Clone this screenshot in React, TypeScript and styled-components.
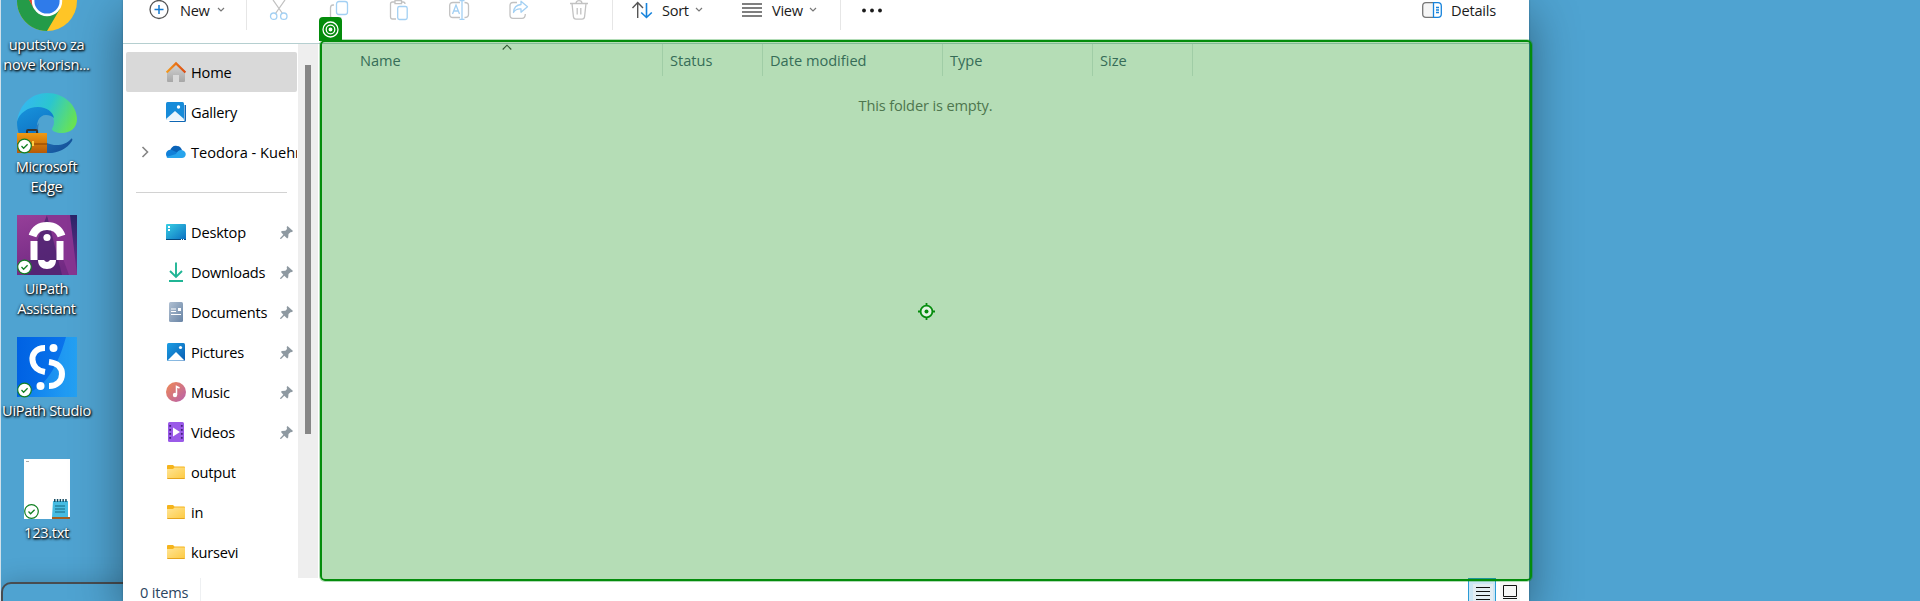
import React from "react";
import styled, { createGlobalStyle } from "styled-components";

const GREEN = "#048c0c";

const Global = createGlobalStyle`
  * { box-sizing: border-box; }
  body { margin: 0; overflow: hidden; font-family: "Open Sans", "Noto Sans", sans-serif; font-size: 14.6px; color: #111; }
  svg { display: block; flex: none; overflow: visible; }
`;

const Desktop = styled.main`
  display: flex;
  position: relative;
  width: 1920px;
  height: 601px;
  overflow: hidden;
  background: #4fa3d1;
  border-left: 1px solid #cfe0ea;
`;

const Shortcuts = styled.div`
  width: 122px;
  flex: none;
  display: flex;
  flex-direction: column;
  margin-top: -29px;
`;

const Shortcut = styled.div`
  width: 92px;
  height: 122px;
  flex: none;
  display: flex;
  flex-direction: column;
  align-items: center;
`;

const ShortcutName = styled.div<{ $ls?: number }>`
  margin: 3px 1px 0 0;
  line-height: 20px;
  text-align: center;
  white-space: pre;
  color: #fff;
  letter-spacing: ${(p) => p.$ls ?? -0.3}px;
  text-shadow: 1px 1px 2px #000, 0 1px 3px #000;
`;

const BackWindow = styled.div`
  position: absolute;
  left: 0;
  top: 582px;
  width: 140px;
  height: 40px;
  border: 2px solid #484c50;
  border-radius: 10px 0 0 0;
  box-shadow: 0 0 26px rgba(0, 0, 0, 0.2);
  background: #4fa3d1;
`;

const Explorer = styled.section`
  position: relative;
  width: 1406px;
  flex: none;
  display: flex;
  flex-direction: column;
  background: #fff;
  box-shadow: 0 0 2px rgba(0, 0, 0, 0.25), 0 14px 46px rgba(0, 0, 0, 0.42);
`;

const Toolbar = styled.header`
  height: 44px;
  flex: none;
  border-bottom: 1px solid #b5cfd0;
`;

const Tools = styled.div`
  height: 40px;
  margin-top: -10px;
  display: flex;
  align-items: center;
  padding-left: 26px;
`;

const Tool = styled.div<{ $w: number; $gap?: number; $ls?: number }>`
  width: ${(p) => p.$w}px;
  height: 20px;
  flex: none;
  display: flex;
  align-items: center;
  gap: ${(p) => p.$gap ?? 11}px;
  letter-spacing: ${(p) => p.$ls ?? -0.3}px;
  color: #1b1b1b;
  white-space: nowrap;
`;

const ToolText = styled.span`
  line-height: 20px;
`;

const ChevronMark = styled.svg`
  margin-left: -4px;
`;

const Rule = styled.div<{ $after: number }>`
  width: 1px;
  height: 40px;
  flex: none;
  background: #e6e6e6;
  margin-right: ${(p) => p.$after}px;
`;

const Grow = styled.div`
  flex: 1;
`;

const Body = styled.div`
  height: 534px;
  flex: none;
  display: flex;
`;

const Nav = styled.nav`
  width: 175px;
  flex: none;
  padding: 8px 1px 0 3px;
  overflow: hidden;
`;

const NavRow = styled.div<{ $active?: boolean }>`
  height: 40px;
  display: flex;
  align-items: center;
  border-radius: 2px;
  background: ${(p) => (p.$active ? "#d9d9d9" : "transparent")};
`;

const Expander = styled.div`
  width: 40px;
  flex: none;
  padding-left: 15px;
`;

const NavIcon = styled.div`
  width: 20px;
  height: 20px;
  flex: none;
`;

const NavText = styled.span<{ $ls?: number }>`
  flex: 1;
  min-width: 0;
  padding-left: 5px;
  line-height: 20px;
  padding-bottom: 1px;
  overflow: hidden;
  white-space: nowrap;
  color: #000;
  letter-spacing: ${(p) => p.$ls ?? -0.2}px;
`;

const PinSlot = styled.div`
  width: 17px;
  flex: none;
`;

const NavSeparator = styled.div`
  height: 40px;
  padding: 20px 10px 0;
  &::after {
    content: "";
    display: block;
    height: 1px;
    background: #d2d2d2;
  }
`;

const Track = styled.div`
  width: 20px;
  flex: none;
  background: #eeeeee;
  padding: 21px 7px 0;
`;

const Thumb = styled.div`
  width: 6px;
  height: 369px;
  background: #868686;
`;

const Files = styled.div`
  flex: 1;
  padding-left: 34px;
`;

const Columns = styled.div`
  display: flex;
  height: 32px;
`;

const Column = styled.div<{ $w: number; $pad?: number }>`
  width: ${(p) => p.$w}px;
  flex: none;
  position: relative;
  border-right: 1px solid #e2e8e8;
  padding: 6px 0 0 ${(p) => p.$pad ?? 7}px;
  line-height: 20px;
  color: #4c607a;
  letter-spacing: 0;
`;

const SortMark = styled.div`
  position: absolute;
  left: 150px;
  top: 0;
`;

const Empty = styled.p`
  margin: 19px 0 0 -34px;
  padding-left: 4px;
  text-align: center;
  line-height: 20px;
  color: #6d6d6d;
  letter-spacing: -0.15px;
`;

const Status = styled.footer`
  display: flex;
  height: 28px;
  padding-left: 17px;
  color: #2b4560;
`;

const Count = styled.div`
  width: 61px;
  height: 28px;
  line-height: 28px;
  border-right: 1px solid #eef0f2;
  letter-spacing: -0.2px;
`;

const ViewButton = styled.div<{ $on?: boolean }>`
  width: 28px;
  height: 30px;
  display: flex;
  justify-content: center;
  background: ${(p) => (p.$on ? "#cce6f5" : "#f5f5f5")};
  border: ${(p) => (p.$on ? "1px solid #2a9bd6" : "4px solid #fff")};
  padding: ${(p) => (p.$on ? "8px 0 0 2px" : "3px 0 0")};
  margin-right: ${(p) => (p.$on ? 0 : 5)}px;
`;

const Highlight = styled.div`
  position: absolute;
  left: 319px;
  top: 40px;
  width: 1212px;
  height: 541px;
  padding: 1px 0 0 1px;
  border: 2px solid ${GREEN};
  border-radius: 5px;
  background: rgba(2, 140, 6, 0.293);
  background-clip: padding-box;
  box-shadow: 0 0 0 1px rgba(0, 138, 14, 0.3);
  display: flex;
  align-items: center;
  justify-content: center;
`;

const Badge = styled.div`
  position: absolute;
  left: -3px;
  top: -25px;
  width: 23px;
  height: 24px;
  border-radius: 4px 4px 0 0;
  background: ${GREEN};
  display: flex;
  align-items: center;
  justify-content: center;
`;

const Chevron = () => (
  <ChevronMark width="8" height="6" viewBox="0 0 8 6" fill="none" stroke="#777" strokeWidth="1.2">
    <path d="M1 1l3 3 3-3" />
  </ChevronMark>
);

const Synced = ({ x = 0, y = 46 }: { x?: number; y?: number }) => (
  <g transform={`translate(${x} ${y})`}>
    <circle cx="7.5" cy="7" r="6.8" fill="#fff" stroke="#128023" strokeWidth="1.2" />
    <path d="M4.5 7l2.1 2.2 4-4" fill="none" stroke="#128023" strokeWidth="1.3" />
  </g>
);

const ChromeIcon = () => (
  <svg width="60" height="60" viewBox="0 0 60 60">
    <circle cx="30" cy="30" r="30" fill="#ffc526" />
    <path d="M30 30L4 15A30 30 0 0 1 56 15z" fill="#e33b2e" />
    <path d="M4 15A30 30 0 0 0 30 60L43.2 37.5 30 30 16.8 37z" fill="#249b48" />
    <path d="M4 15L17 37.500 24 30 14 17z" fill="#e33b2e" />
    <circle cx="30" cy="30" r="15.2" fill="#fff" />
    <circle cx="30" cy="30" r="12.6" fill="#2f7bea" />
  </svg>
);

const EdgeIcon = () => (
  <svg width="60" height="60" viewBox="0 0 60 60">
    <defs>
      <linearGradient id="eTop" x1="0" y1=".3" x2="1" y2=".6">
        <stop offset="0" stopColor="#35b6f5" />
        <stop offset=".5" stopColor="#2bc6cf" />
        <stop offset="1" stopColor="#69e454" />
      </linearGradient>
      <linearGradient id="eMid" x1="0" y1="0" x2=".4" y2="1">
        <stop offset="0" stopColor="#1894dc" />
        <stop offset="1" stopColor="#0b68bd" />
      </linearGradient>
      <linearGradient id="eLow" x1="0" y1="0" x2="1" y2="1">
        <stop offset="0" stopColor="#2b83c6" />
        <stop offset="1" stopColor="#104a93" />
      </linearGradient>
      <linearGradient id="case" x1="0" y1="0" x2="0" y2="1">
        <stop offset="0" stopColor="#f09a13" />
        <stop offset="1" stopColor="#b65a07" />
      </linearGradient>
    </defs>
    <path d="M0 29C2 11 15 0 30 0c18 0 30 13 30 26 0 9-7 14-15 14-6 0-10-2-10-4 0-1 2-3 2-7 0-7-6-12-14-13C11 15 2 21 0 29z" fill="url(#eTop)" />
    <path d="M0 29c2-9 11-15 21-15 9 0 15 5 16 11-2-2-5-3-8-3-7 0-11 8-8 18 3 9 10 16 17 19-3 1-5 1-8 1C12 60 0 47 0 29z" fill="url(#eMid)" />
    <path d="M22 30c-4 13 6 22 17 22 7 0 11-2 15-6 1-1 2 0 1 2-5 8-14 12-23 12-12-3-20-20-10-30z" fill="url(#eLow)" />
    <path d="M10 41v-3q0-1 1-1h8q1 0 1 1v3" fill="none" stroke="#333" strokeWidth="2" />
    <path d="M0 40h30v20H0z" fill="url(#case)" />
    <path d="M0 51h30" stroke="#884000" />
    <path d="M15 48h2v5h-2z" fill="#ffd044" />
    <Synced />
  </svg>
);

const AssistantIcon = () => (
  <svg width="60" height="60" viewBox="0 0 60 60">
    <defs>
      <linearGradient id="aSide" x1="0" y1="0" x2="0" y2="1">
        <stop offset="0" stopColor="#2b2569" />
        <stop offset="1" stopColor="#752e8e" />
      </linearGradient>
      <linearGradient id="aBase" x1="0" y1="0" x2=".3" y2="1">
        <stop offset="0" stopColor="#963f99" />
        <stop offset="1" stopColor="#722a83" />
      </linearGradient>
    </defs>
    <path d="M0 0h60v60H0z" fill="url(#aBase)" />
    <path d="M30 0L7 60h38z" fill="#4c2470" opacity=".8" />
    <path d="M30 0h30v60H52z" fill="#873591" />
    <path d="M53 0h7v60z" fill="url(#aSide)" />
    <path d="M15.500 21C18 14 23 11 30 11s12 3 14.500 10" fill="none" stroke="#fff" strokeWidth="8" />
    <path d="M13.500 26h7v19h-7zM39.500 26h7v19h-7zM21 45h6q3 4 6 0h6c0 6-4 9-9 9s-9-3-9-9z" fill="#fff" />
    <circle cx="30" cy="22.500" r="3.600" fill="#fff" />
    <Synced y={45} />
  </svg>
);

const StudioIcon = () => (
  <svg width="60" height="60" viewBox="0 0 60 60">
    <defs>
      <linearGradient id="sBase">
        <stop offset="0" stopColor="#0062e3" />
        <stop offset="1" stopColor="#0c78ee" />
      </linearGradient>
      <linearGradient id="sSide">
        <stop offset="0" stopColor="#0a79ee" />
        <stop offset="1" stopColor="#25a2f3" />
      </linearGradient>
    </defs>
    <path d="M0 0h60v60H0z" fill="url(#sBase)" />
    <path d="M49 0h11v60H0c24-5 39-24 49-60z" fill="url(#sSide)" />
    <path d="M28 11C18 11 15 18 15.500 23c.5 7 6 11 12.500 12M32 25c9 1 13 6 13 12 0 7-5 12-13 12" fill="none" stroke="#fff" strokeWidth="6" />
    <circle cx="36.500" cy="11" r="4" fill="#fff" />
    <circle cx="23.500" cy="49" r="4" fill="#fff" />
    <Synced />
  </svg>
);

const TextFileIcon = () => (
  <svg width="60" height="60" viewBox="0 0 60 60">
    <path d="M7 0h46v60H7z" fill="#fff" />
    <path d="M9 2.500h3" stroke="#aaa" />
    <path d="M36 42h15v16H35z" fill="#47bce2" />
    <path d="M37 41.500h13" stroke="#164e65" strokeWidth="3" strokeDasharray="1.500 1.300" />
    <path d="M38 47h10M38 50h10M38 53h10" stroke="#176880" />
    <path d="M35 58h18v2H35z" fill="#a45f20" />
    <Synced x={7} y={45.500} />
  </svg>
);

const Pin = () => (
  <svg width="13" height="13" viewBox="0 0 13 13" fill="#8e99a1">
    <path d="M7.500 0L13 5 12 6l-1.500.2L8.500 8l-.3 3.500-1 1L4.300 9.700 1 13l-1-.2.200-.8L3.300 8.700 1 6l.8-1 3.600-.3L7 3 6.700 1z" />
  </svg>
);

const icons: Record<string, React.ReactNode> = {
  Home: (
    <svg width="20" height="20" viewBox="0 0 20 20">
      <defs>
        <linearGradient id="hWall" x1="0" y1="0" x2="0" y2="1">
          <stop offset="0" stopColor="#d3d3d3" />
          <stop offset="1" stopColor="#a7a7a7" />
        </linearGradient>
        <linearGradient id="hRoof">
          <stop offset="0" stopColor="#f49a1c" />
          <stop offset="1" stopColor="#dc4a12" />
        </linearGradient>
      </defs>
      <path d="M10 2l9 8.500V19q0 1-1 1h-5v-7H7v7H2q-1 0-1-1v-8.500z" fill="url(#hWall)" />
      <path d="M.6 10.500L10 1.400l9.400 9.100" fill="none" stroke="url(#hRoof)" strokeWidth="2.200" />
    </svg>
  ),
  Gallery: (
    <svg width="20" height="20" viewBox="0 0 20 20">
      <path d="M3 19h15.500V3H20v15.500q0 1.500-1.500 1.500H4z" fill="#0e66b4" />
      <rect width="18" height="18" rx="1.500" fill="#168bd9" />
      <path d="M0 17l9-8 9 8q0 1-1 1H1q-1 0-1-1z" fill="#e9f4fc" />
      <circle cx="12.500" cy="5" r="1.700" fill="#fff" />
    </svg>
  ),
  Cloud: (
    <svg width="20" height="20" viewBox="0 0 20 20">
      <path d="M4 9c1-4 4-6 7-5 3 0 4 2 5 4l-6 4z" fill="#0a63b8" />
      <path d="M0 12c0-3 3-5 6-4l8 4-11 4c-2 0-3-2-3-4z" fill="#1180d8" />
      <path d="M10 12c2-4 5-5 8-3 3 2 2 7-2 7H3c-1 0-2-.4-2.500-1z" fill="#27a4ec" />
    </svg>
  ),
  Desktop: (
    <svg width="20" height="20" viewBox="0 0 20 20">
      <defs>
        <linearGradient id="dBg" x1="0" y1="0" x2="1" y2="1">
          <stop offset="0" stopColor="#38cfe4" />
          <stop offset="1" stopColor="#0a6ec1" />
        </linearGradient>
      </defs>
      <rect y="2" width="20" height="16" rx="1" fill="url(#dBg)" />
      <path d="M2 4h2v2H2zM2 7h2v2H2z" fill="#fff" />
      <path d="M0 17.500h20" stroke="#06497f" />
      <path d="M15 17.500h4" stroke="#fff" strokeDasharray="1 1" />
    </svg>
  ),
  Downloads: (
    <svg width="20" height="20" viewBox="0 0 20 20" fill="none" stroke="#20b595" strokeWidth="1.900">
      <path d="M10 .5v14M4 9l6 6 6-6M3 19h14" />
    </svg>
  ),
  Documents: (
    <svg width="20" height="20" viewBox="0 0 20 20">
      <defs>
        <linearGradient id="docBg" x1="0" y1="0" x2="1" y2="1">
          <stop offset="0" stopColor="#b0c0d2" />
          <stop offset="1" stopColor="#6884a5" />
        </linearGradient>
      </defs>
      <rect x="3" width="14" height="20" rx="1.500" fill="url(#docBg)" />
      <path d="M5 7h5M5 9.500h5M5 12.500h10M12 7.500h3" stroke="#fff" strokeWidth="1.200" />
      <path d="M12 6h3v3h-3z" fill="#fff" />
    </svg>
  ),
  Pictures: (
    <svg width="20" height="20" viewBox="0 0 20 20">
      <defs>
        <linearGradient id="pBg" x1="0" y1="0" x2="1" y2="1">
          <stop offset="0" stopColor="#1b9ee4" />
          <stop offset="1" stopColor="#0b5eb3" />
        </linearGradient>
      </defs>
      <rect x="1" y="1" width="18" height="18" rx="1.500" fill="url(#pBg)" />
      <path d="M2 18l8-8 8 8q0 .5-1 .5H3q-1 0-1-.5z" fill="#fff" />
      <circle cx="14.500" cy="5.500" r="1.600" fill="#fff" />
    </svg>
  ),
  Music: (
    <svg width="20" height="20" viewBox="0 0 20 20">
      <defs>
        <linearGradient id="mBg" x1="0" y1="0" x2="1" y2="1">
          <stop offset="0" stopColor="#f08a54" />
          <stop offset="1" stopColor="#b65fae" />
        </linearGradient>
      </defs>
      <circle cx="10" cy="10" r="10" fill="url(#mBg)" />
      <path d="M10.500 13V4.500l3 1.500" fill="none" stroke="#fff" strokeWidth="1.500" />
      <circle cx="9" cy="13" r="2.200" fill="#fff" />
    </svg>
  ),
  Videos: (
    <svg width="20" height="20" viewBox="0 0 20 20">
      <rect x="2" width="16" height="20" rx="1.500" fill="#9a5ae8" />
      <path d="M4.200 3v15M15.800 3v15" stroke="#44217d" strokeWidth="1.800" strokeDasharray="1.800 2.200" />
      <path d="M7 5.500l7 4.500-7 4.500z" fill="#fff" />
    </svg>
  ),
  Folder: (
    <svg width="20" height="20" viewBox="0 0 20 20">
      <defs>
        <linearGradient id="fBg" x1="0" y1="0" x2="1" y2="1">
          <stop offset="0" stopColor="#ffe596" />
          <stop offset="1" stopColor="#fdca43" />
        </linearGradient>
      </defs>
      <path d="M1 4q0-1 1-1h5l1.500 1.500H18q1 0 1 1V8H1z" fill="#f5b41c" />
      <path d="M1 7h6l1.500-1.500H19V16q0 .7-1 .7H2q-1 0-1-.7z" fill="url(#fBg)" />
      <path d="M1.300 16.500h17.400" stroke="#e5a41e" />
    </svg>
  ),
};

const quickAccess = [
  { icon: "Desktop", name: "Desktop", pinned: true },
  { icon: "Downloads", name: "Downloads", pinned: true },
  { icon: "Documents", name: "Documents", pinned: true },
  { icon: "Pictures", name: "Pictures", pinned: true },
  { icon: "Music", name: "Music", pinned: true },
  { icon: "Videos", name: "Videos", pinned: true },
  { icon: "Folder", name: "output" },
  { icon: "Folder", name: "in" },
  { icon: "Folder", name: "kursevi" },
];

const GREY = "#c2c2c2";
const BLUE = "#a3d0f3";

const editIcons = [
  <svg key="cut" width="20" height="20" viewBox="0 0 20 20" fill="none" stroke={GREY} strokeWidth="1.300">
    <path d="M4 0l9.500 13.500M16 0L6.500 13.500" />
    <g stroke={BLUE}><circle cx="4.700" cy="16.200" r="3.200" /><circle cx="14.800" cy="16.200" r="3.200" /></g>
  </svg>,
  <svg key="copy" width="20" height="20" viewBox="0 0 20 20" fill="none" stroke={GREY} strokeWidth="1.300">
    <path d="M5 5H4Q1.500 5 1.500 8v8q0 3 3 3h5q2 0 2.500-1.500" />
    <rect x="7.500" y="1.500" width="11" height="13" rx="2.500" stroke={BLUE} />
  </svg>,
  <svg key="paste" width="20" height="20" viewBox="0 0 20 20" fill="none" stroke={GREY} strokeWidth="1.300">
    <path d="M7 19H3.500Q1.500 19 1.500 17V4q0-2 2-2H6m7 0h1q2 0 2 2M6 .7h6.500v3H6z" />
    <rect x="8.700" y="6.500" width="9.500" height="13" rx="1.800" stroke={BLUE} />
  </svg>,
  <svg key="rename" width="20" height="20" viewBox="0 0 20 20" fill="none" stroke={GREY} strokeWidth="1.300">
    <path d="M11 2.500H4Q.7 2.500.7 5.500v9q0 3 3.300 3h7M15.500 2.500q4 0 4 3v9q0 3-4 3" />
    <g stroke={BLUE}><path d="M3.500 14l3.500-9 3.500 9M4.700 11h4.600M10.500.7h5M10.500 19.300h5M13 .7v18.600" /></g>
  </svg>,
  <svg key="share" width="20" height="20" viewBox="0 0 20 20" fill="none" stroke={GREY} strokeWidth="1.300" strokeLinejoin="round">
    <path d="M8 2.500H4q-3 0-3 3V15q0 3.300 3 3.300h9q3.300 0 3.300-4.300" />
    <path d="M12 1.200l6.500 5.500L12 12.200V9Q7 8.500 4.500 12.500 5 5 12 4.500z" stroke={BLUE} />
  </svg>,
  <svg key="delete" width="20" height="20" viewBox="0 0 20 20" fill="none" stroke={GREY} strokeWidth="1.300">
    <path d="M1 3.500h18M7 3.500Q7 .7 10 .7t3 2.800M3 3.500l1.400 13q.3 2.600 2.600 2.600h6q2.300 0 2.600-2.600L17 3.500M8.200 8v6.500M11.800 8v6.500" />
  </svg>,
];

export default function App() {
  return (
    <Desktop>
      <Global />
      <BackWindow />
      <Shortcuts>
        <Shortcut><ChromeIcon /><ShortcutName>{"uputstvo za\nnove korisn..."}</ShortcutName></Shortcut>
        <Shortcut><EdgeIcon /><ShortcutName>{"Microsoft\nEdge"}</ShortcutName></Shortcut>
        <Shortcut><AssistantIcon /><ShortcutName>{"UiPath\nAssistant"}</ShortcutName></Shortcut>
        <Shortcut><StudioIcon /><ShortcutName>UiPath Studio</ShortcutName></Shortcut>
        <Shortcut><TextFileIcon /><ShortcutName>123.txt</ShortcutName></Shortcut>
      </Shortcuts>
      <Explorer>
        <Toolbar>
          <Tools>
            <Tool $w={97}>
              <svg width="20" height="20" viewBox="0 0 20 20" fill="none" strokeWidth="1.300">
                <circle cx="10" cy="9.500" r="9" stroke="#555" />
                <path d="M10 5v9M5.500 9.500h9" stroke="#1479d0" strokeWidth="1.500" />
              </svg>
              <ToolText>New</ToolText><Chevron />
            </Tool>
            <Rule $after={22} />
            {editIcons.map((icon, i) => <Tool key={i} $w={i === 5 ? 43 : 60}>{icon}</Tool>)}
            <Rule $after={19} />
            <Tool $w={110} $gap={10}>
              <svg width="20" height="20" viewBox="0 0 20 20" fill="none" strokeWidth="1.400">
                <path d="M.5 8L5.700 2.500 11 8M5.700 2.500V18" stroke="#555" />
                <path d="M9.200 12.500l5.300 5 5.300-5M14.500 17.500V3" stroke="#1683dc" strokeWidth="1.600" />
              </svg>
              <ToolText>Sort</ToolText><Chevron />
            </Tool>
            <Tool $w={98} $gap={10}>
              <svg width="20" height="20" viewBox="0 0 20 20" stroke="#555" strokeWidth="1.300">
                <path d="M0 4h20M0 8h20M0 12h20M0 16h20" />
              </svg>
              <ToolText>View</ToolText><Chevron />
            </Tool>
            <Rule $after={21} />
            <Tool $w={20}>
              <svg width="20" height="20" viewBox="0 0 20 20" fill="#1b1b1b">
                <circle cx="2" cy="10.500" r="1.900" /><circle cx="10" cy="10.500" r="1.900" /><circle cx="18" cy="10.500" r="1.900" />
              </svg>
            </Tool>
            <Grow />
            <Tool $w={107} $gap={9} $ls={-0.2}>
              <svg width="20" height="20" viewBox="0 0 20 20" fill="none" strokeWidth="1.300">
                <path d="M11.500 2.700H4Q.7 2.700.7 6v8q0 3.300 3.300 3.300h7.500" stroke="#777" fill="#f6f6f6" />
                <path d="M11.500 2.700H16q3.300 0 3.300 3.300v8q0 3.300-3.300 3.300h-4.500zM14 7.500h3M14 10h3M14 12.500h3" stroke="#1683dc" />
              </svg>
              <ToolText>Details</ToolText>
            </Tool>
          </Tools>
        </Toolbar>
        <Body>
          <Nav>
            <NavRow $active><Expander /><NavIcon>{icons.Home}</NavIcon><NavText>Home</NavText></NavRow>
            <NavRow><Expander /><NavIcon>{icons.Gallery}</NavIcon><NavText>Gallery</NavText></NavRow>
            <NavRow>
              <Expander>
                <svg width="8" height="12" viewBox="0 0 8 12" fill="none" stroke="#858585" strokeWidth="1.600"><path d="M1.500 1l5 5-5 5" /></svg>
              </Expander>
              <NavIcon>{icons.Cloud}</NavIcon><NavText $ls={0}>Teodora - Kuehn</NavText>
            </NavRow>
            <NavSeparator />
            {quickAccess.map((q) => (
              <NavRow key={q.name}>
                <Expander /><NavIcon>{icons[q.icon]}</NavIcon><NavText>{q.name}</NavText>
                {q.pinned && <PinSlot><Pin /></PinSlot>}
              </NavRow>
            ))}
          </Nav>
          <Track><Thumb /></Track>
          <Files>
            <Columns>
              <Column $w={311} $pad={8}>
                Name
                <SortMark>
                  <svg width="10" height="7" viewBox="0 0 10 7" fill="none" stroke="#444" strokeWidth="1.100"><path d="M.7 5.500L5 1.200l4.300 4.300" /></svg>
                </SortMark>
              </Column>
              <Column $w={100}>Status</Column>
              <Column $w={180}>Date modified</Column>
              <Column $w={150}>Type</Column>
              <Column $w={100}>Size</Column>
            </Columns>
            <Empty>This folder is empty.</Empty>
          </Files>
        </Body>
        <Status>
          <Count>0 items</Count>
          <Grow />
          <ViewButton $on>
            <svg width="18" height="18" viewBox="0 0 18 18"><path d="M-1-3h20v24H-1z" fill="#e3edf3" /><path d="M2 .5h14M2 4.500h14M2 8.500h14M2 12.500h14" stroke="#111" /></svg>
          </ViewButton>
          <ViewButton>
            <svg width="14" height="16" viewBox="0 0 14 16" fill="none" stroke="#111"><path d="M.5.500h13v11H.5zM0 13.500h14" /></svg>
          </ViewButton>
        </Status>
      </Explorer>
      <Highlight>
        <Badge>
          <svg width="17" height="17" viewBox="0 0 17 17" fill="none" stroke="#fff" strokeWidth="1.300">
            <circle cx="8.500" cy="8.500" r="7.500" /><circle cx="8.500" cy="8.500" r="4.300" /><circle cx="8.500" cy="8.500" r="1.300" fill="#fff" />
          </svg>
        </Badge>
        <svg width="17" height="17" viewBox="0 0 17 17" fill="none" stroke={GREEN} strokeWidth="1.800">
          <circle cx="8.500" cy="8.500" r="5.900" fill="#e2f3e3" />
          <path d="M8.500 0v3M8.500 14v3M0 8.500h3M14 8.500h3" />
          <circle cx="8.500" cy="8.500" r="2" fill={GREEN} stroke="none" />
        </svg>
      </Highlight>
    </Desktop>
  );
}
